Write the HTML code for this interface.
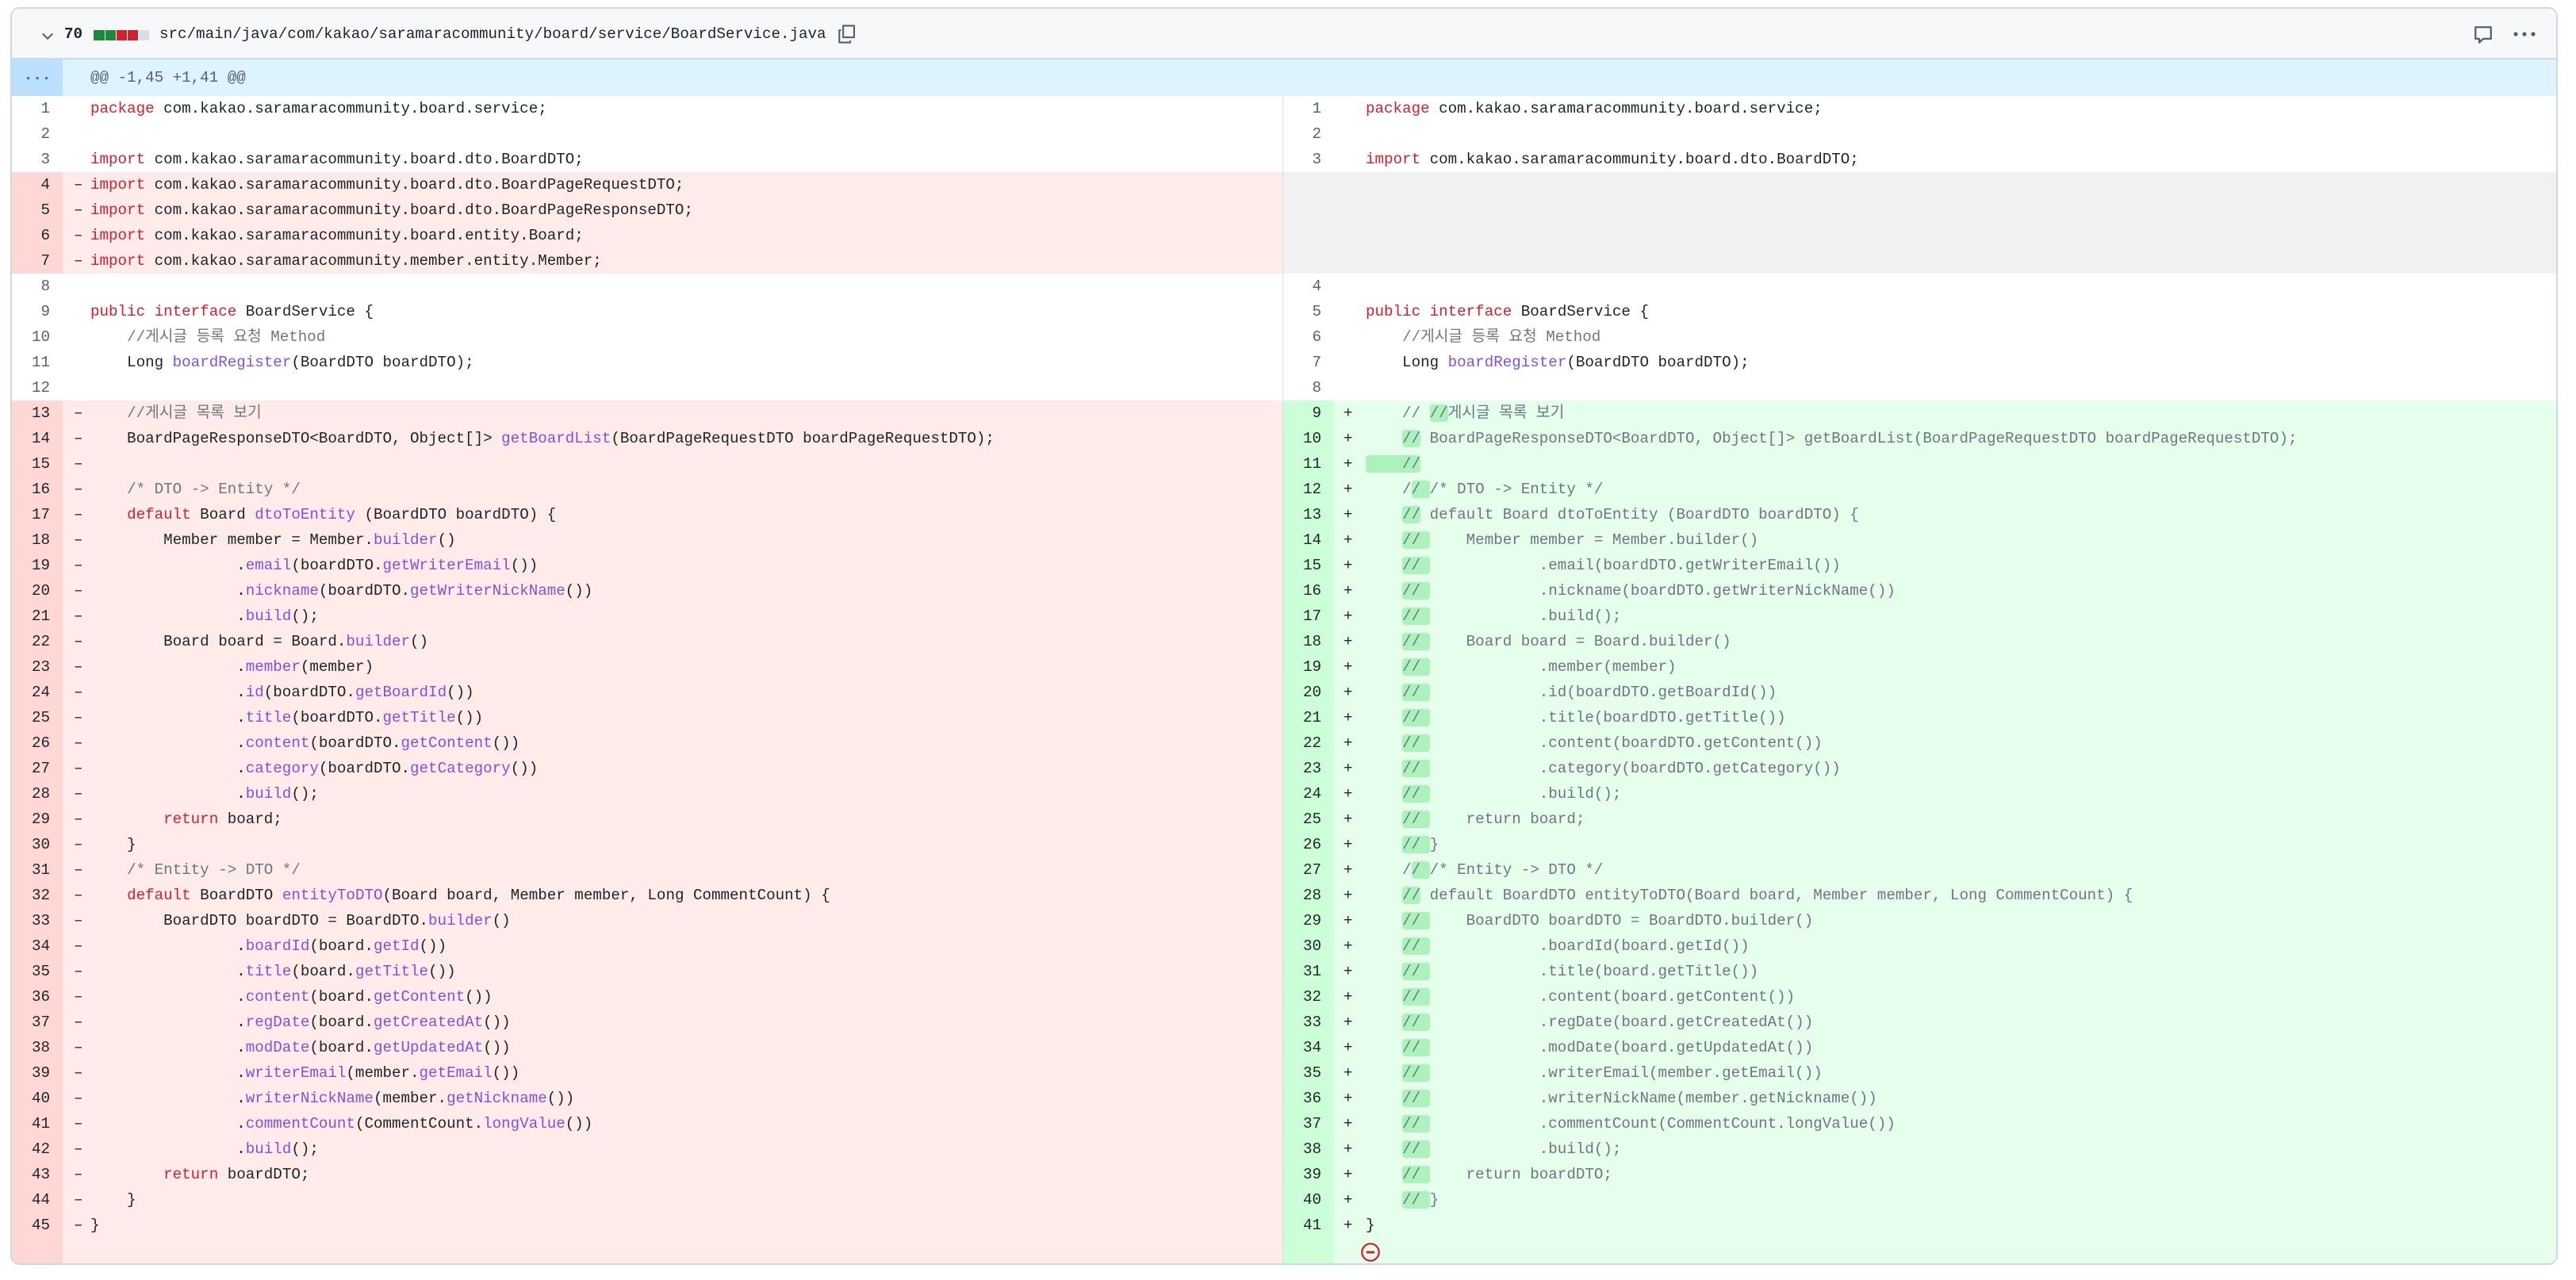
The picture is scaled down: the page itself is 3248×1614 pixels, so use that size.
<!DOCTYPE html>
<html><head><meta charset="utf-8"><style>
*{margin:0;padding:0;box-sizing:border-box}
body{width:3248px;height:1614px;background:#fff;font-family:"Liberation Mono","Noto Sans CJK KR",monospace;font-size:19.2px;color:#1f2328;position:relative;overflow:hidden}
.box{position:absolute;left:13px;top:9px;width:3212px;height:1586px;border:2px solid #d0d7de;border-radius:12px;overflow:hidden}
.hd{position:absolute;left:0;top:0;right:0;height:64px;background:#f6f8fa;border-bottom:2px solid #d0d7de}
.hk{position:absolute;left:0;top:64px;right:0;height:46px;background:#ddf4ff}
.hk .g{position:absolute;left:0;top:0;width:64px;height:46px;background:#bbdfff;text-align:center;line-height:40px;color:#57606a;font-weight:bold}
.hk .t{position:absolute;left:99px;top:0;line-height:46px;color:#57606a}
.rows{position:absolute;left:0;top:110px;right:0}
.r{position:relative;height:32px;line-height:32px;white-space:pre}
.P{position:absolute;top:0;height:32px}
.L{left:0;width:1602px}
.R{left:1602px;right:0;border-left:1px solid #d8dee4}
.n{position:absolute;left:0;top:0;width:64px;height:32px;text-align:right;padding-right:16px;color:#1f2328}
.s{position:absolute;left:78px;top:0}
.t{position:absolute;left:99px;top:0}
.R .s{left:76px}.R .t{left:104px}
.ctx .n{color:#57606a}
.del{background:#ffebe9}.del .n{background:#ffd7d5}
.add{background:#e6ffec}.add .n{background:#ccffd8}
.emp{background:#eff1f3}
.k{color:#cf222e}.f{color:#8250df}.c{color:#6e7781}
.h{background:#abf2bc;border-radius:4px}
</style></head><body>
<div class="box">
<div class="hd">
<svg style="position:absolute;left:35px;top:24px" width="20" height="20" viewBox="0 0 16 16"><path d="M3 6l5 5 5-5" fill="none" stroke="#57606a" stroke-width="1.6"/></svg>
<span style="position:absolute;left:66px;top:16px;line-height:32px;font-weight:bold">70</span>
<span style="position:absolute;left:103px;top:27px;width:14px;height:13px;background:#1f883d"></span>
<span style="position:absolute;left:117px;top:27px;width:14px;height:13px;background:#1f883d;border-left:1px solid #fff"></span>
<span style="position:absolute;left:131px;top:27px;width:14px;height:13px;background:#cf222e;border-left:1px solid #fff"></span>
<span style="position:absolute;left:145px;top:27px;width:14px;height:13px;background:#cf222e;border-left:1px solid #fff"></span>
<span style="position:absolute;left:159px;top:27px;width:14px;height:13px;background:#d8dee4;border-left:1px solid #fff"></span>
<span style="position:absolute;left:186px;top:16px;line-height:32px">src/main/java/com/kakao/saramaracommunity/board/service/BoardService.java</span>
<svg style="position:absolute;left:1040px;top:19px" width="26" height="26" viewBox="0 0 16 16"><path d="M5 1.5h8.5v9H5z M3.5 5H2v9.5h8.5V13" fill="none" stroke="#57606a" stroke-width="1.3" stroke-linejoin="round"/></svg>
<svg style="position:absolute;left:3103px;top:20px" width="26" height="26" viewBox="0 0 16 16"><path d="M2 2h12v9H8l-3 3v-3H2z" fill="none" stroke="#57606a" stroke-width="1.4" stroke-linejoin="round"/></svg>
<svg style="position:absolute;left:3153px;top:26px" width="30" height="12" viewBox="0 0 30 12"><circle cx="4" cy="6" r="2.6" fill="#57606a"/><circle cx="15" cy="6" r="2.6" fill="#57606a"/><circle cx="26" cy="6" r="2.6" fill="#57606a"/></svg>
</div>
<div class="hk"><div class="g">...</div><div class="t">@@ -1,45 +1,41 @@</div></div>
<div class="rows">
<div class="r"><div class="P L ctx"><span class="n">1</span><span class="t"><span class="k">package</span> com.kakao.saramaracommunity.board.service;</span></div><div class="P R ctx"><span class="n">1</span><span class="t"><span class="k">package</span> com.kakao.saramaracommunity.board.service;</span></div></div>
<div class="r"><div class="P L ctx"><span class="n">2</span></div><div class="P R ctx"><span class="n">2</span></div></div>
<div class="r"><div class="P L ctx"><span class="n">3</span><span class="t"><span class="k">import</span> com.kakao.saramaracommunity.board.dto.BoardDTO;</span></div><div class="P R ctx"><span class="n">3</span><span class="t"><span class="k">import</span> com.kakao.saramaracommunity.board.dto.BoardDTO;</span></div></div>
<div class="r"><div class="P L del"><span class="n">4</span><span class="s">–</span><span class="t"><span class="k">import</span> com.kakao.saramaracommunity.board.dto.BoardPageRequestDTO;</span></div><div class="P R emp"></div></div>
<div class="r"><div class="P L del"><span class="n">5</span><span class="s">–</span><span class="t"><span class="k">import</span> com.kakao.saramaracommunity.board.dto.BoardPageResponseDTO;</span></div><div class="P R emp"></div></div>
<div class="r"><div class="P L del"><span class="n">6</span><span class="s">–</span><span class="t"><span class="k">import</span> com.kakao.saramaracommunity.board.entity.Board;</span></div><div class="P R emp"></div></div>
<div class="r"><div class="P L del"><span class="n">7</span><span class="s">–</span><span class="t"><span class="k">import</span> com.kakao.saramaracommunity.member.entity.Member;</span></div><div class="P R emp"></div></div>
<div class="r"><div class="P L ctx"><span class="n">8</span></div><div class="P R ctx"><span class="n">4</span></div></div>
<div class="r"><div class="P L ctx"><span class="n">9</span><span class="t"><span class="k">public</span> <span class="k">interface</span> BoardService {</span></div><div class="P R ctx"><span class="n">5</span><span class="t"><span class="k">public</span> <span class="k">interface</span> BoardService {</span></div></div>
<div class="r"><div class="P L ctx"><span class="n">10</span><span class="t">    <span class="c">//게시글 등록 요청 Method</span></span></div><div class="P R ctx"><span class="n">6</span><span class="t">    <span class="c">//게시글 등록 요청 Method</span></span></div></div>
<div class="r"><div class="P L ctx"><span class="n">11</span><span class="t">    Long <span class="f">boardRegister</span>(BoardDTO boardDTO);</span></div><div class="P R ctx"><span class="n">7</span><span class="t">    Long <span class="f">boardRegister</span>(BoardDTO boardDTO);</span></div></div>
<div class="r"><div class="P L ctx"><span class="n">12</span></div><div class="P R ctx"><span class="n">8</span></div></div>
<div class="r"><div class="P L del"><span class="n">13</span><span class="s">–</span><span class="t">    <span class="c">//게시글 목록 보기</span></span></div><div class="P R add"><span class="n">9</span><span class="s">+</span><span class="t c">    // <span class="h">//</span>게시글 목록 보기</span></div></div>
<div class="r"><div class="P L del"><span class="n">14</span><span class="s">–</span><span class="t">    BoardPageResponseDTO&lt;BoardDTO, Object[]&gt; <span class="f">getBoardList</span>(BoardPageRequestDTO boardPageRequestDTO);</span></div><div class="P R add"><span class="n">10</span><span class="s">+</span><span class="t c">    <span class="h">//</span> BoardPageResponseDTO&lt;BoardDTO, Object[]&gt; getBoardList(BoardPageRequestDTO boardPageRequestDTO);</span></div></div>
<div class="r"><div class="P L del"><span class="n">15</span><span class="s">–</span></div><div class="P R add"><span class="n">11</span><span class="s">+</span><span class="t c"><span class="h">    //</span></span></div></div>
<div class="r"><div class="P L del"><span class="n">16</span><span class="s">–</span><span class="t">    <span class="c">/* DTO -&gt; Entity */</span></span></div><div class="P R add"><span class="n">12</span><span class="s">+</span><span class="t c">    /<span class="h">/ </span>/* DTO -&gt; Entity */</span></div></div>
<div class="r"><div class="P L del"><span class="n">17</span><span class="s">–</span><span class="t">    <span class="k">default</span> Board <span class="f">dtoToEntity</span> (BoardDTO boardDTO) {</span></div><div class="P R add"><span class="n">13</span><span class="s">+</span><span class="t c">    <span class="h">//</span> default Board dtoToEntity (BoardDTO boardDTO) {</span></div></div>
<div class="r"><div class="P L del"><span class="n">18</span><span class="s">–</span><span class="t">        Member member = Member.<span class="f">builder</span>()</span></div><div class="P R add"><span class="n">14</span><span class="s">+</span><span class="t c">    <span class="h">// </span>    Member member = Member.builder()</span></div></div>
<div class="r"><div class="P L del"><span class="n">19</span><span class="s">–</span><span class="t">                .<span class="f">email</span>(boardDTO.<span class="f">getWriterEmail</span>())</span></div><div class="P R add"><span class="n">15</span><span class="s">+</span><span class="t c">    <span class="h">// </span>            .email(boardDTO.getWriterEmail())</span></div></div>
<div class="r"><div class="P L del"><span class="n">20</span><span class="s">–</span><span class="t">                .<span class="f">nickname</span>(boardDTO.<span class="f">getWriterNickName</span>())</span></div><div class="P R add"><span class="n">16</span><span class="s">+</span><span class="t c">    <span class="h">// </span>            .nickname(boardDTO.getWriterNickName())</span></div></div>
<div class="r"><div class="P L del"><span class="n">21</span><span class="s">–</span><span class="t">                .<span class="f">build</span>();</span></div><div class="P R add"><span class="n">17</span><span class="s">+</span><span class="t c">    <span class="h">// </span>            .build();</span></div></div>
<div class="r"><div class="P L del"><span class="n">22</span><span class="s">–</span><span class="t">        Board board = Board.<span class="f">builder</span>()</span></div><div class="P R add"><span class="n">18</span><span class="s">+</span><span class="t c">    <span class="h">// </span>    Board board = Board.builder()</span></div></div>
<div class="r"><div class="P L del"><span class="n">23</span><span class="s">–</span><span class="t">                .<span class="f">member</span>(member)</span></div><div class="P R add"><span class="n">19</span><span class="s">+</span><span class="t c">    <span class="h">// </span>            .member(member)</span></div></div>
<div class="r"><div class="P L del"><span class="n">24</span><span class="s">–</span><span class="t">                .<span class="f">id</span>(boardDTO.<span class="f">getBoardId</span>())</span></div><div class="P R add"><span class="n">20</span><span class="s">+</span><span class="t c">    <span class="h">// </span>            .id(boardDTO.getBoardId())</span></div></div>
<div class="r"><div class="P L del"><span class="n">25</span><span class="s">–</span><span class="t">                .<span class="f">title</span>(boardDTO.<span class="f">getTitle</span>())</span></div><div class="P R add"><span class="n">21</span><span class="s">+</span><span class="t c">    <span class="h">// </span>            .title(boardDTO.getTitle())</span></div></div>
<div class="r"><div class="P L del"><span class="n">26</span><span class="s">–</span><span class="t">                .<span class="f">content</span>(boardDTO.<span class="f">getContent</span>())</span></div><div class="P R add"><span class="n">22</span><span class="s">+</span><span class="t c">    <span class="h">// </span>            .content(boardDTO.getContent())</span></div></div>
<div class="r"><div class="P L del"><span class="n">27</span><span class="s">–</span><span class="t">                .<span class="f">category</span>(boardDTO.<span class="f">getCategory</span>())</span></div><div class="P R add"><span class="n">23</span><span class="s">+</span><span class="t c">    <span class="h">// </span>            .category(boardDTO.getCategory())</span></div></div>
<div class="r"><div class="P L del"><span class="n">28</span><span class="s">–</span><span class="t">                .<span class="f">build</span>();</span></div><div class="P R add"><span class="n">24</span><span class="s">+</span><span class="t c">    <span class="h">// </span>            .build();</span></div></div>
<div class="r"><div class="P L del"><span class="n">29</span><span class="s">–</span><span class="t">        <span class="k">return</span> board;</span></div><div class="P R add"><span class="n">25</span><span class="s">+</span><span class="t c">    <span class="h">// </span>    return board;</span></div></div>
<div class="r"><div class="P L del"><span class="n">30</span><span class="s">–</span><span class="t">    }</span></div><div class="P R add"><span class="n">26</span><span class="s">+</span><span class="t c">    <span class="h">// </span>}</span></div></div>
<div class="r"><div class="P L del"><span class="n">31</span><span class="s">–</span><span class="t">    <span class="c">/* Entity -&gt; DTO */</span></span></div><div class="P R add"><span class="n">27</span><span class="s">+</span><span class="t c">    /<span class="h">/ </span>/* Entity -&gt; DTO */</span></div></div>
<div class="r"><div class="P L del"><span class="n">32</span><span class="s">–</span><span class="t">    <span class="k">default</span> BoardDTO <span class="f">entityToDTO</span>(Board board, Member member, Long CommentCount) {</span></div><div class="P R add"><span class="n">28</span><span class="s">+</span><span class="t c">    <span class="h">//</span> default BoardDTO entityToDTO(Board board, Member member, Long CommentCount) {</span></div></div>
<div class="r"><div class="P L del"><span class="n">33</span><span class="s">–</span><span class="t">        BoardDTO boardDTO = BoardDTO.<span class="f">builder</span>()</span></div><div class="P R add"><span class="n">29</span><span class="s">+</span><span class="t c">    <span class="h">// </span>    BoardDTO boardDTO = BoardDTO.builder()</span></div></div>
<div class="r"><div class="P L del"><span class="n">34</span><span class="s">–</span><span class="t">                .<span class="f">boardId</span>(board.<span class="f">getId</span>())</span></div><div class="P R add"><span class="n">30</span><span class="s">+</span><span class="t c">    <span class="h">// </span>            .boardId(board.getId())</span></div></div>
<div class="r"><div class="P L del"><span class="n">35</span><span class="s">–</span><span class="t">                .<span class="f">title</span>(board.<span class="f">getTitle</span>())</span></div><div class="P R add"><span class="n">31</span><span class="s">+</span><span class="t c">    <span class="h">// </span>            .title(board.getTitle())</span></div></div>
<div class="r"><div class="P L del"><span class="n">36</span><span class="s">–</span><span class="t">                .<span class="f">content</span>(board.<span class="f">getContent</span>())</span></div><div class="P R add"><span class="n">32</span><span class="s">+</span><span class="t c">    <span class="h">// </span>            .content(board.getContent())</span></div></div>
<div class="r"><div class="P L del"><span class="n">37</span><span class="s">–</span><span class="t">                .<span class="f">regDate</span>(board.<span class="f">getCreatedAt</span>())</span></div><div class="P R add"><span class="n">33</span><span class="s">+</span><span class="t c">    <span class="h">// </span>            .regDate(board.getCreatedAt())</span></div></div>
<div class="r"><div class="P L del"><span class="n">38</span><span class="s">–</span><span class="t">                .<span class="f">modDate</span>(board.<span class="f">getUpdatedAt</span>())</span></div><div class="P R add"><span class="n">34</span><span class="s">+</span><span class="t c">    <span class="h">// </span>            .modDate(board.getUpdatedAt())</span></div></div>
<div class="r"><div class="P L del"><span class="n">39</span><span class="s">–</span><span class="t">                .<span class="f">writerEmail</span>(member.<span class="f">getEmail</span>())</span></div><div class="P R add"><span class="n">35</span><span class="s">+</span><span class="t c">    <span class="h">// </span>            .writerEmail(member.getEmail())</span></div></div>
<div class="r"><div class="P L del"><span class="n">40</span><span class="s">–</span><span class="t">                .<span class="f">writerNickName</span>(member.<span class="f">getNickname</span>())</span></div><div class="P R add"><span class="n">36</span><span class="s">+</span><span class="t c">    <span class="h">// </span>            .writerNickName(member.getNickname())</span></div></div>
<div class="r"><div class="P L del"><span class="n">41</span><span class="s">–</span><span class="t">                .<span class="f">commentCount</span>(CommentCount.<span class="f">longValue</span>())</span></div><div class="P R add"><span class="n">37</span><span class="s">+</span><span class="t c">    <span class="h">// </span>            .commentCount(CommentCount.longValue())</span></div></div>
<div class="r"><div class="P L del"><span class="n">42</span><span class="s">–</span><span class="t">                .<span class="f">build</span>();</span></div><div class="P R add"><span class="n">38</span><span class="s">+</span><span class="t c">    <span class="h">// </span>            .build();</span></div></div>
<div class="r"><div class="P L del"><span class="n">43</span><span class="s">–</span><span class="t">        <span class="k">return</span> boardDTO;</span></div><div class="P R add"><span class="n">39</span><span class="s">+</span><span class="t c">    <span class="h">// </span>    return boardDTO;</span></div></div>
<div class="r"><div class="P L del"><span class="n">44</span><span class="s">–</span><span class="t">    }</span></div><div class="P R add"><span class="n">40</span><span class="s">+</span><span class="t c">    <span class="h">// </span>}</span></div></div>
<div class="r"><div class="P L del"><span class="n">45</span><span class="s">–</span><span class="t">}</span></div><div class="P R add"><span class="n">41</span><span class="s">+</span><span class="t">}</span></div></div>
<div class="r" style="height:36px"><div class="P L del" style="height:36px"><span class="n" style="height:36px"></span></div><div class="P R add" style="height:36px"><span class="n" style="height:36px"></span>
<svg style="position:absolute;left:97px;top:5px" width="26" height="26" viewBox="0 0 16 16"><circle cx="8" cy="8" r="6.6" fill="none" stroke="#cf222e" stroke-width="1.4"/><path d="M4.8 8h6.4" stroke="#cf222e" stroke-width="1.8"/></svg></div></div>
</div>
</div>
</body></html>
